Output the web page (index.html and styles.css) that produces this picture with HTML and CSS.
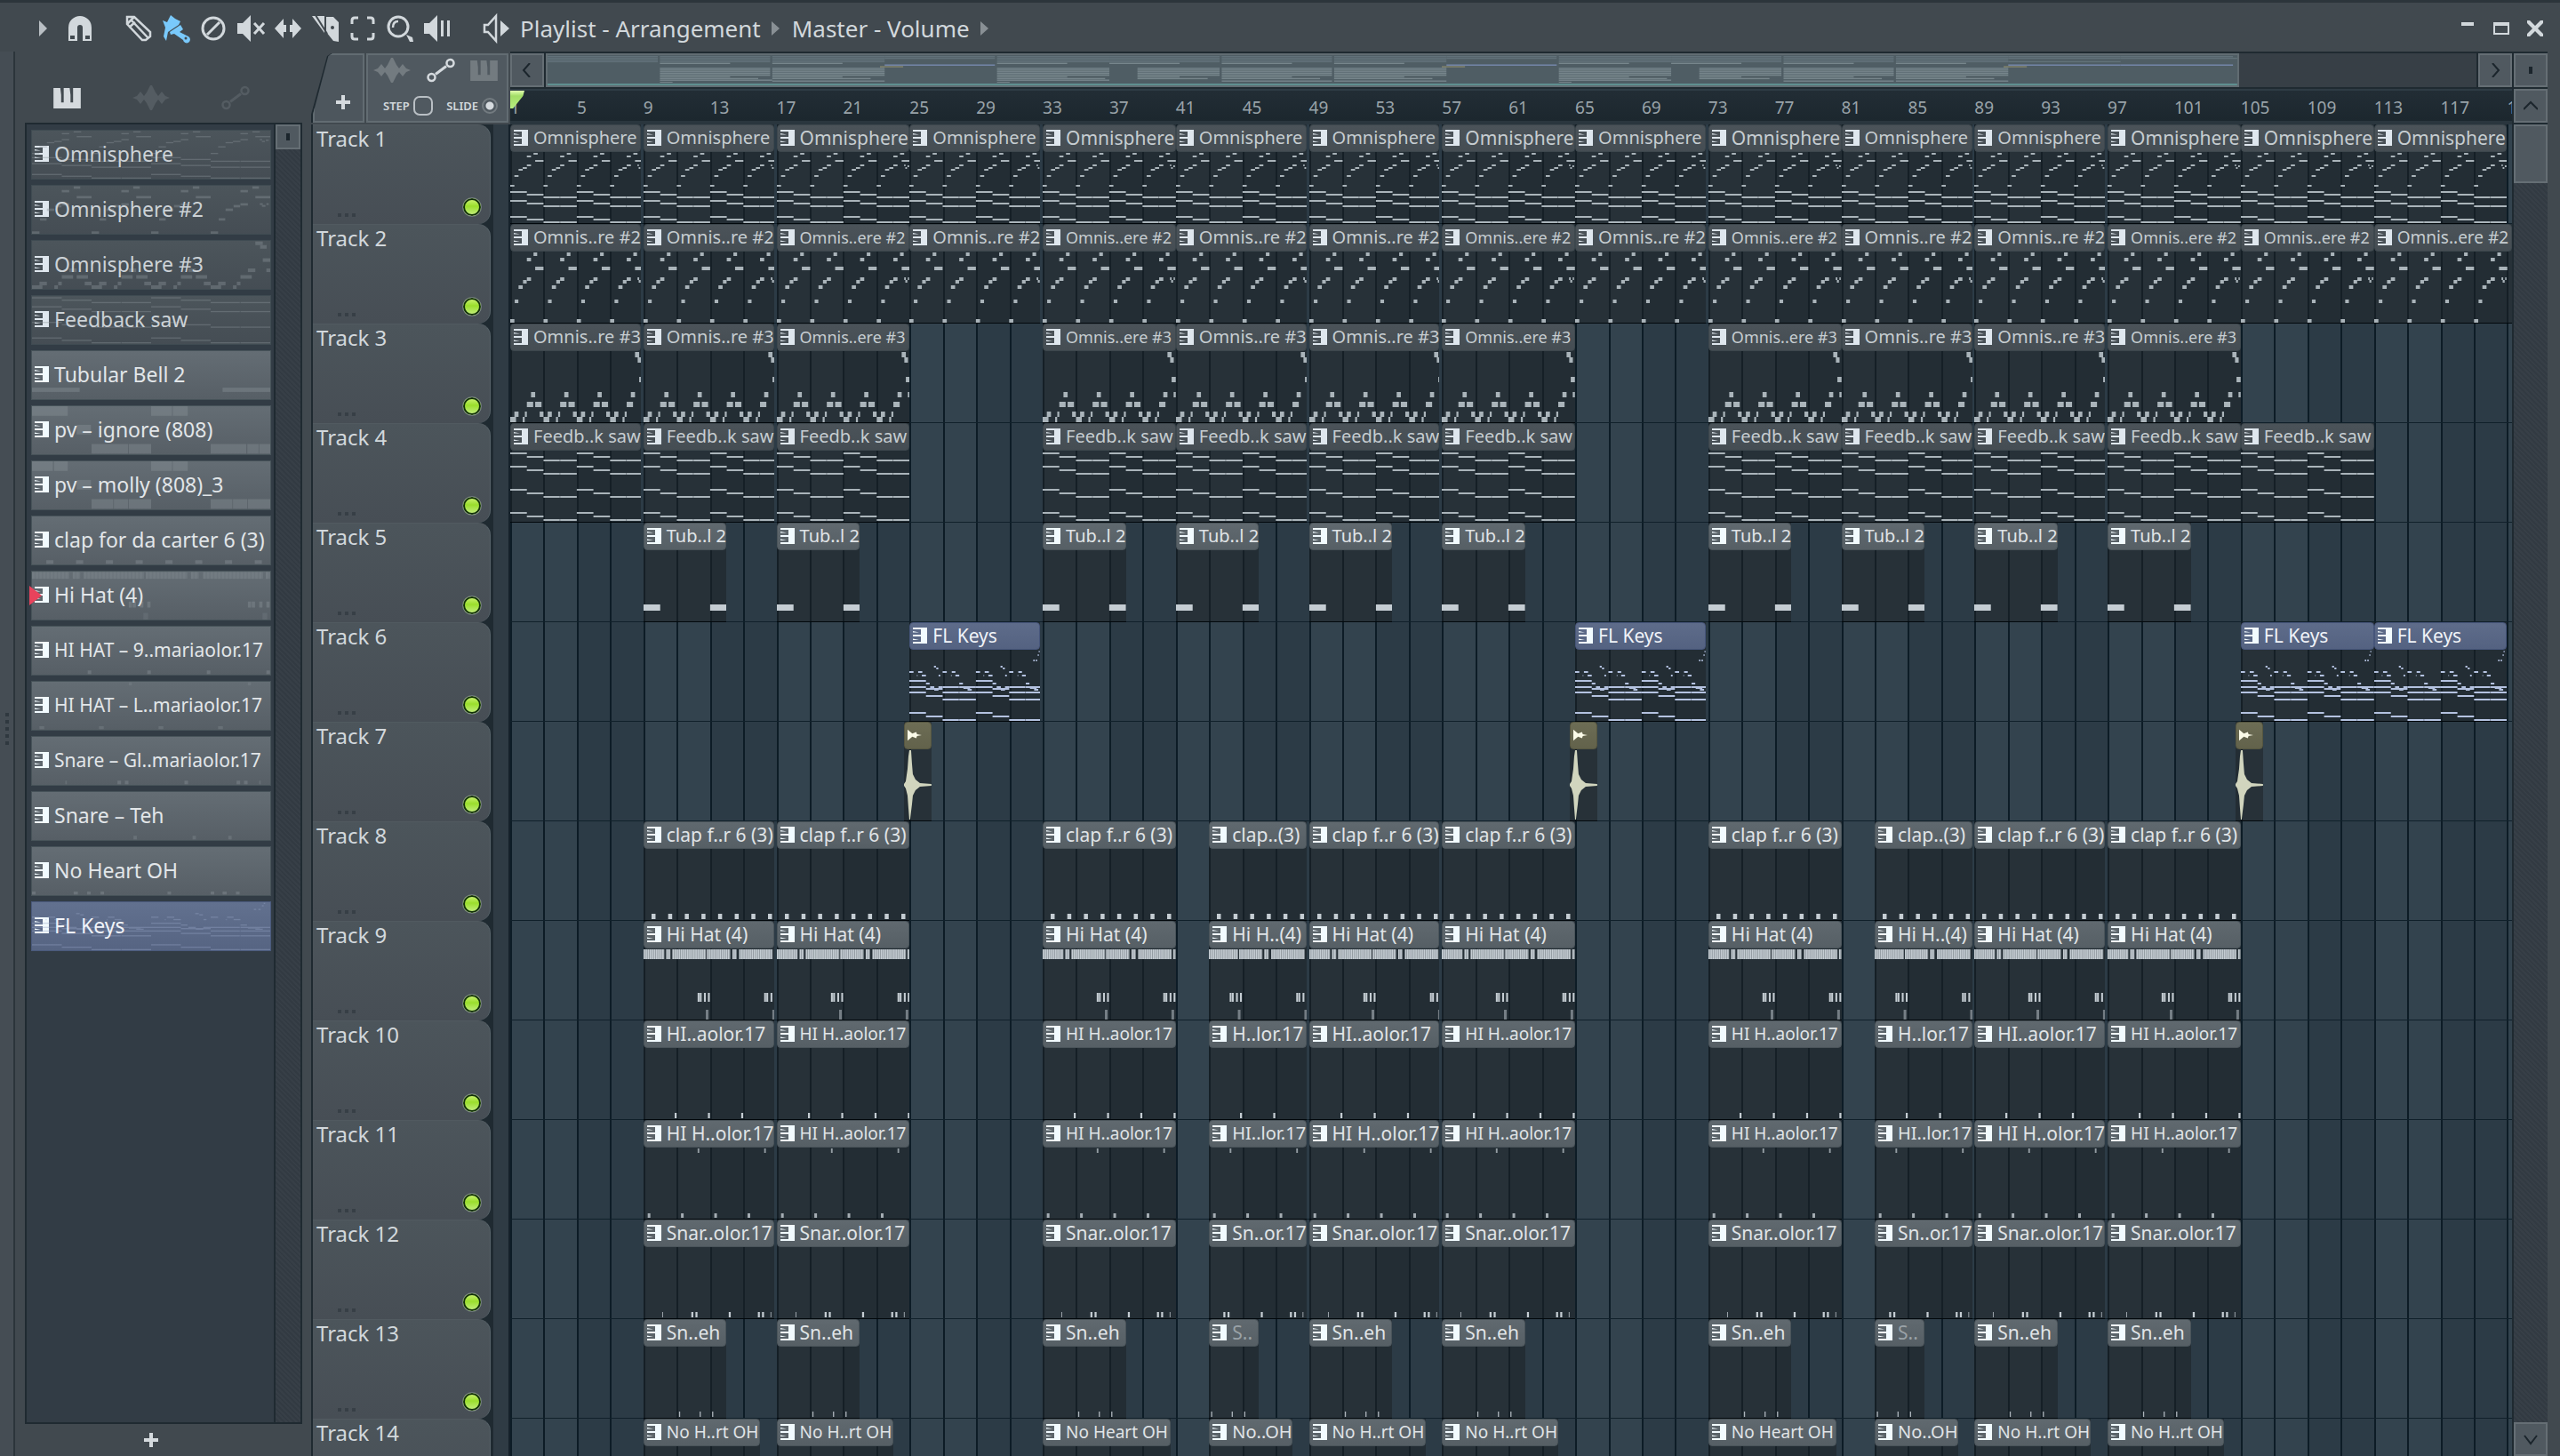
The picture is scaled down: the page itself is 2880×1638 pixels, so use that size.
FILE: index.html
```html
<!DOCTYPE html>
<html lang="en">

<head>
    <meta charset="UTF-8">
    <title>Playlist - Arrangement</title>
    <link rel="stylesheet" href="styles.css">
</head>

<body>

    <svg class="defs" aria-hidden="true">
        <symbol id="i-keys" viewBox="0 0 16 18" preserveAspectRatio="none">
            <path d="M0 0H16V18H0V16H9V10H0V8H9V2H0Z" />
            <path d="M0 4L7 5.500H0ZM0 12.500L7 14H0Z" />
        </symbol>
        <symbol id="i-piano" viewBox="0 0 32 24">
            <path d="M0 0H8L9 8V17H12V0H19L20 8V17H23V0H32V24H0Z" />
        </symbol>
        <symbol id="i-wave" viewBox="0 0 42 28">
            <path d="M0 14L5 12L9 7L13 12L16 8L20 0H22L26 8L29 12L33 7L37 12L42 14L37 16L33 21L29 16L26 20L22 28H20L16 20L13 16L9 21L5 16Z" />
        </symbol>
        <symbol id="i-auto" viewBox="0 0 32 28">
            <g fill="none" stroke="currentColor" stroke-width="2.500">
                <circle cx="5.500" cy="22" r="4" />
                <circle cx="26.500" cy="6" r="4" />
                <path d="M10 18.500L22 9.500" stroke-width="3" />
            </g>
        </symbol>
        <symbol id="i-sample" viewBox="0 0 18 14">
            <path d="M0 0L6 5L11 3L12 6L18 7L12 8L11 11L6 9L0 14Z" />
        </symbol>
    </svg>

    <header class="titlebar">
        <nav class="tools">
            <button class="tool menu" aria-label="Menu"><svg viewBox="0 0 30 30"><path d="M11 6L20 15L11 24Z" /></svg></button>
            <button class="tool magnet" aria-label="Snap"><svg viewBox="0 0 30 30"><path fill-rule="evenodd" d="M2 29V14A13 13 0 0 1 28 14V29H18V14A3 3 0 0 0 12 14V29ZM4 23V27H9V23ZM21 23V27H26V23Z" /></svg></button>
            <button class="tool" aria-label="Draw"><svg viewBox="0 0 30 30"><path class="line" d="M2 2H10L28 19V24L23 28H19L2 10ZM2 10L10 2M7 6L25 25M4 14L11 8" /></svg></button>
            <button class="tool on" aria-label="Paint"><svg viewBox="0 0 30 30"><path d="M0 6L5 8L9 0L14 4L20 7L18 11L6 19L4 29L1 24L3 14ZM20 11L23 16L19 19L29 24A4 4 0 1 1 23 28L13 21L9 22L8 19Z" /><circle cx="26" cy="26" r="1.500" class="hole" /></svg></button>
            <button class="tool" aria-label="Delete"><svg viewBox="0 0 30 30"><path class="line thick" d="M15 3A12 12 0 1 0 15 27A12 12 0 1 0 15 3M8 22L22 8" /></svg></button>
            <button class="tool" aria-label="Mute"><svg viewBox="0 0 30 30"><path d="M0 9H6L15 0V30L6 21H0Z" /><path class="line thick" d="M19 9L30 21M30 9L19 21" /></svg></button>
            <button class="tool" aria-label="Slip"><svg viewBox="0 0 30 30"><path d="M0 15L10 4V11H13V19H10V26ZM30 15L20 4V11H17V19H20V26Z" /></svg></button>
            <button class="tool" aria-label="Slice"><svg viewBox="0 0 30 30"><path d="M0 1L14 1V20ZM16 2H24L30 8V30L24 29L16 19Z" /><path class="cut" d="M4 0L17 21" /><circle cx="23" cy="14" r="2" class="hole" /></svg></button>
            <button class="tool" aria-label="Select"><svg viewBox="0 0 30 30"><path class="line thick" d="M3 10V6Q3 3 6 3H10M20 3H24Q27 3 27 6V10M27 20V24Q27 27 24 27H20M10 27H6Q3 27 3 24V20" /></svg></button>
            <button class="tool" aria-label="Zoom"><svg viewBox="0 0 30 30"><circle class="line thick" cx="13" cy="13" r="11" /><path class="line" d="M7 14Q7 7 13 7" /><path d="M22 22L29 25L30 30H26Z" /></svg></button>
            <button class="tool" aria-label="Playback"><svg viewBox="0 0 30 30"><path d="M0 9H6L15 0V30L6 21H0Z" /><path d="M19 6H22V24H19ZM26 6H29V24H26Z" /></svg></button>
            <button class="tool out" aria-label="Preview"><svg viewBox="0 0 30 30"><path class="line" d="M2 11H6L15 1V29L6 19H2Z" /><path d="M20 6L30 15L20 24Z" /></svg></button>
        </nav>
        <h1 class="crumbs"><span>Playlist - Arrangement</span><i></i><span>Master - Volume</span><i></i></h1>
        <div class="window-buttons">
            <button aria-label="Minimize"><svg viewBox="0 0 20 20"><path d="M3 3H17V7H3Z" /></svg></button>
            <button aria-label="Maximize"><svg viewBox="0 0 20 20"><path fill-rule="evenodd" d="M1 3H19V17H1ZM3 7V15H17V7Z" /></svg></button>
            <button aria-label="Close"><svg viewBox="0 0 20 20"><path d="M1 1H4L10 7L16 1H19V4L13 10L19 16V19H16L10 13L4 19H1V16L7 10L1 4Z" /></svg></button>
        </div>
    </header>

    <main class="window">
        <div class="grip"><i></i><i></i><i></i><i></i><i></i></div>

        <aside class="picker">
            <div class="tabs">
                <button class="on" aria-label="Patterns"><svg class="ic-piano"><use href="#i-piano" /></svg></button>
                <button aria-label="Audio"><svg class="ic-wave"><use href="#i-wave" /></svg></button>
                <button aria-label="Automation"><svg class="ic-auto"><use href="#i-auto" /></svg></button>
            </div>
            <div class="picker-box">
                <div class="picker-list" id="picker"></div>
                <div class="picker-scroll"><button aria-label="Scroll"><i></i></button></div>
            </div>
            <button class="add" aria-label="Add pattern"></button>
        </aside>

        <section class="playlist">
            <div class="corner">
                <div class="corner-tab"><button class="plus" aria-label="Add track"></button></div>
                <div class="corner-panel">
                    <div class="modes">
                        <svg class="ic-wave"><use href="#i-wave" /></svg>
                        <svg class="ic-auto on"><use href="#i-auto" /></svg>
                        <svg class="ic-piano"><use href="#i-piano" /></svg>
                    </div>
                    <div class="options">
                        <label>STEP<input type="checkbox"></label>
                        <label>SLIDE<input type="radio" checked></label>
                    </div>
                </div>
            </div>

            <div class="timeline">
                <div class="overview">
                    <button class="square" aria-label="Scroll left"><svg viewBox="0 0 16 16"><path d="M11 0L4 8L11 16" /></svg></button>
                    <div class="minimap"><div class="thumb" id="minimap"></div></div>
                    <button class="square" aria-label="Scroll right"><svg viewBox="0 0 16 16"><path d="M5 0L12 8L5 16" /></svg></button>
                </div>
                <div class="ruler" id="ruler"></div>
            </div>

            <div class="side-top">
                <button class="square" aria-label="View"><i></i></button>
                <button class="square" aria-label="Scroll up"><svg viewBox="0 0 16 16"><path d="M0 12L8 4L16 12" /></svg></button>
            </div>

            <div class="heads" id="heads"></div>
            <div class="lanes" id="lanes"></div>
            <div class="scroll-y">
                <div class="thumb-y"></div>
                <button class="square" aria-label="Scroll down"><svg viewBox="0 0 16 16"><path d="M1 4L8 13L15 4" /></svg></button>
            </div>
        </section>
    </main>

    <script src="playlist.js"></script>
</body>

</html>
```
FILE: styles.css
```css
* {
    box-sizing: border-box;
    margin: 0;
    padding: 0;
}

body {
    display: flex;
    flex-direction: column;
    height: 100vh;
    overflow: hidden;
    background: #41494f;
    border-top: 3px solid #2c353b;
    color: #d2d8dc;
    font-family: "Noto Sans", "Open Sans", sans-serif;
    font-size: 24px;
}

button {
    border: 0;
    background: none;
    color: inherit;
    font: inherit;
}

svg {
    display: block;
    fill: currentColor;
}

.defs {
    position: absolute;
    width: 0;
    height: 0;
}

/* title bar */
.titlebar {
    display: flex;
    align-items: center;
    height: 55px;
    padding: 2px 18px 0 27px;
}

.tools {
    display: flex;
}

.tool {
    display: flex;
    justify-content: center;
    width: 42px;
}

.tool svg {
    width: 30px;
    height: 30px;
    overflow: visible;
}

.tool .line {
    fill: none;
    stroke: currentColor;
    stroke-width: 2.500;
}

.tool .thick {
    stroke-width: 3;
}

.tool .hole {
    fill: #41494f;
}

.tool .cut {
    stroke: #41494f;
    stroke-width: 2;
}

.tool.on {
    color: #79c9fb;
}

.tool.magnet {
    margin-right: 24px;
}

.tool.out {
    margin-left: 24px;
}

.tool.menu {
    color: #b9bfc4;
}

.crumbs {
    display: flex;
    align-items: center;
    flex: 1;
    padding-left: 6px;
    font-size: 26px;
    font-weight: 400;
    line-height: 32px;
}

.crumbs i {
    margin: 0 14px 0 12px;
    border-left: 9px solid #899095;
    border-top: 8px solid transparent;
    border-bottom: 8px solid transparent;
}

.window-buttons {
    display: flex;
    gap: 18px;
}

.window-buttons svg {
    width: 20px;
    height: 20px;
}

.window {
    display: flex;
    flex: 1;
    min-height: 0;
}

/* resize handle on the far left */
.grip {
    display: flex;
    flex-direction: column;
    align-items: center;
    justify-content: center;
    gap: 4px;
    width: 17px;
    padding-bottom: 56px;
    background: #454d54;
    border-right: 2px solid #2c353b;
}

.grip i {
    width: 4px;
    height: 4px;
    background: #2f383f;
}

/* picker */
.picker {
    display: flex;
    flex-direction: column;
    flex: none;
    width: 333px;
    padding: 34px 10px 0 11px;
}

.tabs {
    display: flex;
    justify-content: space-between;
    align-items: center;
    height: 36px;
    margin-bottom: 10px;
    padding: 0 59px 0 32px;
}

.tabs button {
    color: #545c62;
}

.tabs .on {
    color: #d5dade;
}

.ic-piano {
    width: 31px;
    height: 23px;
}

.ic-wave {
    width: 42px;
    height: 28px;
}

.ic-auto {
    width: 32px;
    height: 28px;
}

.picker-box {
    display: flex;
    flex: 1;
    border: 2px solid #1f2a31;
    background: #323c45;
}

.picker-list {
    display: flex;
    flex-direction: column;
    flex: 1;
    min-width: 0;
    gap: 6px;
    padding: 6px 3px 6px 5px;
}

.pattern {
    position: relative;
    display: flex;
    align-items: center;
    width: 100%;
    height: 56px;
    padding: 0 0 2px 3px;
    border: 1px solid #3f4b52;
    background: linear-gradient(#4c555b, #454d54);
    color: #ccd2d6;
    text-align: left;
    white-space: nowrap;
}

.pattern.bright {
    border-color: #475359;
    background: linear-gradient(#646d74, #575f66);
    color: #e2e6e9;
}

.pattern.keys {
    border-color: #4a5a7c;
    background: linear-gradient(#62718f, #566482);
    color: #f0f3f8;
}

.pattern .icon,
.clip .icon {
    flex: none;
    width: 16px;
    height: 18px;
    color: #dfe7ee;
}

.pattern.bright .icon,
.pattern.keys .icon {
    color: #f2fbff;
}

.pattern .label {
    padding-left: 6px;
    font-size: 23px;
    line-height: 30px;
    z-index: 1;
}

.pattern .notes {
    position: absolute;
    inset: 0;
    width: 100%;
    height: 100%;
    fill: #8a9399;
    opacity: 0.4;
}

.pattern.keys .notes {
    fill: #94a3c4;
}

.pattern.playing::before {
    content: "";
    position: absolute;
    left: -3px;
    top: 16px;
    width: 14px;
    height: 22px;
    background: #e8435c;
    clip-path: polygon(0 0, 100% 50%, 0 100%);
    z-index: 2;
}

.picker-scroll,
.scroll-y {
    background: repeating-linear-gradient(45deg, #373f47 0 2px, #323a42 2px 4px);
}

.picker-scroll {
    flex: none;
    width: 30px;
    border-left: 2px solid #1f2a31;
}

.picker-scroll button {
    width: 28px;
    height: 28px;
    border: 2px solid #656e74;
    background: #505960;
}

.picker-scroll i,
.side-top i {
    display: block;
    width: 4px;
    height: 8px;
    margin: auto;
    background: #1b252c;
}

.plus,
.add {
    background: linear-gradient(currentColor, currentColor) center / 16px 4px no-repeat,
        linear-gradient(currentColor, currentColor) center / 4px 16px no-repeat;
    color: #d5dade;
}

.add {
    height: 36px;
    margin-right: 28px;
    padding-top: 8px;
}

/* playlist */
.playlist {
    display: grid;
    grid-template-columns: 224px minmax(0, 1fr) 40px;
    grid-template-rows: 82px minmax(0, 1fr);
    flex: 1;
    min-width: 0;
    margin-right: 14px;
    background: #1f2a31;
}

.corner {
    display: flex;
    gap: 2px;
    padding: 2px 2px 2px 0;
    background: #41494f;
}

.corner-tab {
    display: flex;
    width: 60px;
    padding: 0 0 0 2px;
    background: #1f2a31;
    clip-path: polygon(0 100%, 0 88%, 30% 4%, 38% 0, 100% 0, 100% 100%);
}

.corner-tab .plus {
    flex: 1;
    background-color: #4d565d;
    background-position: 24px 51px, 30px 45px;
    border: 2px solid #626c72;
    clip-path: polygon(0 100%, 0 88%, 30% 4%, 38% 0, 100% 0, 100% 100%);
}

.corner-panel {
    display: flex;
    flex-direction: column;
    flex: 1;
    border: 2px solid #626c72;
    background: #505960;
}

.modes {
    display: flex;
    justify-content: space-between;
    align-items: center;
    height: 34px;
    padding: 0 10px 0 6px;
    color: #737b80;
}

.modes .on {
    color: #d5dade;
}

.options {
    display: flex;
    justify-content: space-between;
    align-items: center;
    flex: 1;
    padding: 6px 10px 0 17px;
}

.options label {
    display: flex;
    align-items: center;
    gap: 4px;
    font-size: 13px;
    font-weight: 600;
    line-height: 18px;
}

.options input {
    appearance: none;
    width: 22px;
    height: 22px;
    border: 2px solid #b9bfc4;
    border-radius: 7px;
}

.options input[type="radio"] {
    width: 18px;
    height: 18px;
    border-color: #737b80;
    border-radius: 50%;
    background: radial-gradient(#d5dade 0 4px, transparent 5px);
}

.square {
    display: flex;
    align-items: center;
    justify-content: center;
    flex: none;
    width: 38px;
    height: 38px;
    border: 2px solid #656e74;
    background: #505960;
}

.square svg {
    width: 16px;
    height: 16px;
    fill: none;
    stroke: #1b252c;
    stroke-width: 2;
}

.timeline {
    display: flex;
    flex-direction: column;
    min-width: 0;
    background: #1f2a31;
}

.overview {
    display: flex;
    gap: 2px;
    padding: 2px 0;
}

.minimap {
    flex: 1;
    height: 38px;
    background: #373f46;
}

.thumb {
    width: 87.7%;
    height: 38px;
    border: 2px solid #616c72;
    background: #4f5d64;
}

.thumb svg {
    width: 100%;
    height: 34px;
}

.ruler {
    position: relative;
    flex: 1;
    overflow: hidden;
    border-top: 2px solid #2f3c45;
    border-bottom: 4px solid #2a363e;
    background: linear-gradient(#222d35, #1c272e);
}

.ruler span {
    position: absolute;
    top: 6px;
    color: #99a3a9;
    font-size: 19px;
    line-height: 26px;
}

.playhead {
    position: absolute;
    left: 0;
    top: 0;
    width: 16px;
    height: 20px;
    background: linear-gradient(#e2ffb0, #a3dd66 30%, #b7ee80);
    clip-path: polygon(0 0, 100% 0, 90% 30%, 20% 100%, 0 100%);
    z-index: 1;
}

.side-top {
    display: flex;
    flex-direction: column;
    gap: 2px;
    padding: 2px 0 0 2px;
}

/* track headers */
.heads {
    overflow: hidden;
    border-left: 2px solid #1f2a31;
    border-right: 2px solid #15212a;
}

.head {
    display: flex;
    height: 112px;
    border-right: 17px solid #2f3b44;
}

.head-face {
    display: flex;
    flex-direction: column;
    justify-content: space-between;
    width: 200px;
    height: 112px;
    padding: 0 9px 8px 4px;
    border-top: 1px solid #515a60;
    border-right: 1px solid #58636a;
    border-radius: 0 14px 14px 0;
    background: linear-gradient(#4c555b, #474e55);
}

.head h2 {
    font-size: 24px;
    font-weight: 400;
    line-height: 30px;
}

.head-foot {
    display: flex;
    justify-content: space-between;
    align-items: flex-end;
    padding-left: 24px;
}

.dots {
    width: 20px;
    height: 4px;
    background: repeating-linear-gradient(to right, #373f46 0 4px, transparent 4px 8px);
}

.led {
    width: 22px;
    height: 22px;
    border: 1px solid #717b80;
    border-radius: 50%;
    background: linear-gradient(#d2f57c, #9ade2c 45%, #c8f088);
    box-shadow: inset 0 0 0 2px #12300a;
}

/* clips */
.lanes {
    container-type: inline-size;
    overflow: hidden;
}

.lane {
    --bar: calc(100cqw / 120.3);
    position: relative;
    height: 112px;
    border-bottom: 1px solid #10202a;
    background: repeating-linear-gradient(to right, #0d1c26 0 2px, transparent 2px calc(var(--bar) * 2)),
        repeating-linear-gradient(to right, #33434e 0 calc(var(--bar) * 4), #2c3b46 calc(var(--bar) * 4) calc(var(--bar) * 8));
}

.clip {
    position: absolute;
    top: 0;
    height: 112px;
    overflow: hidden;
    background: rgba(30, 34, 38, 0.55);
    border-bottom: 1px solid #02080c;
    color: #c6cdd1;
    fill: #aab4ba;
}

.clip-head {
    display: flex;
    align-items: center;
    height: 31px;
    padding: 0 0 2px 3px;
    border: 1px solid #3d474d;
    border-radius: 4px;
    background: linear-gradient(#4b5359, #454d53);
    white-space: nowrap;
}

.clip .label {
    padding-left: 6px;
    font-size: 21px;
    line-height: 26px;
}

.clip .notes {
    width: 100%;
    height: 80px;
    fill: inherit;
}

.clip.bright {
    color: #e0e4e7;
    fill: #c5cdd3;
}

.clip.bright .clip-head {
    border-color: #4a545a;
    background: linear-gradient(#60696f, #565f65);
}

.clip.bright .icon,
.clip.keys .icon {
    color: #f2fbff;
}

.clip.keys {
    color: #f0f3f8;
    fill: #b4c2e0;
}

.clip.keys .clip-head {
    border-color: #46557a;
    background: linear-gradient(#5e6c8a, #546281);
}

.clip.audio {
    fill: #d1d5be;
}

.clip.audio .clip-head {
    border-color: #565640;
    background: linear-gradient(#6d6d55, #62624b);
}

.clip.audio .icon {
    height: 14px;
    color: #fbfbe8;
}

.clip .faded {
    color: #9aa2a7;
}

.scroll-y {
    display: flex;
    flex-direction: column;
    justify-content: space-between;
    border-left: 2px solid #1f2a31;
}

.thumb-y {
    width: 38px;
    height: 66px;
    border: 2px solid #656e74;
    background: #505960;
}
```
FILE: playlist.js
```js
const BARS = 120.3; // bars visible in the playlist
const SHORT = 7.85;

// notes are [start bar, length in bars, y, height]
function chords(rows) {
    const out = [];
    [0, 4].forEach((b) => {
        rows[0].forEach((y) => out.push([b, 1, y, 2]));
        rows[1].forEach((y) => out.push([b + 1, 1, y, 2]));
        rows[2].forEach((y) => out.push([b + 2, 0.98, y, 2], [b + 3, 1, y, 2]));
    });
    return out;
}

function loop(notes, step, count) {
    const out = [];
    for (let i = 0; i < count; i++) {
        notes.forEach((n) => out.push([n[0] + i * step, n[1], n[2], n[3], n[4]]));
    }
    return out;
}

function hats() {
    const out = [];
    [[0, 1.25], [1.37, 1.62], [1.74, 3.76], [3.82, 5.22], [5.34, 5.6], [5.75, 7.76], [7.85, 8]].forEach(([a, b]) => {
        out.push([a, b - a, 1, 11, 0.65]);
        for (let x = a; x < b - 0.05; x += 0.125) out.push([x, 0.08, 1, 11]);
    });
    [3.25, 3.38, 3.63, 3.87, 7.25, 7.38, 7.63, 7.87].forEach((x) => out.push([x, 0.11, 50, 10]));
    out.push([3.74, 0.16, 69, 11, 0.5], [7.74, 0.16, 69, 11, 0.5]);
    return out;
}

const ticks = (xs, w, y, h, o) => xs.map((x) => [x, w, y, h, o]);

const patterns = {
    omni1: loop([[0, .25, 37, 2], [.25, .25, 26, 2], [.5, .25, 19, 2], [.75, .25, 17, 2], [1, .25, 14, 2], [1, .25, 4, 2], [1.4, .25, 1, 2], [1.5, .5, 9, 2]], 2, 4)
        .concat([[7.65, .08, 14, 2], [7.72, .1, 17, 2], [7.85, .1, 15, 2]], chords([[44, 54, 72], [47, 57, 75], [50, 60, 78]])),
    omni2: loop([[0, .25, 76, 4], [.27, .22, 54, 4], [.5, .25, 38, 4], [.77, .22, 32, 4], [1, .25, 29, 4], [1, .25, 7, 4], [1.4, .22, 1, 4], [1.5, .5, 17, 4]], 2, 4)
        .concat([[7.65, .1, 29, 3], [7.72, .12, 32, 3], [7.87, .08, 29, 3]]),
    omni3: loop([[0, .35, 74, 6], [.25, .25, 68, 6], [.75, .12, 74, 6], [.88, .12, 68, 6], [1, .38, 57, 6], [1.25, .25, 46, 6]], 2, 4)
        .concat(loop([[1.5, .38, 57, 6], [1.77, .23, 68, 6]], 2, 3), [[7.5, .25, 1, 6], [7.66, .22, 7, 6], [7.75, .25, 29, 6], [7.87, .13, 46, 6]]),
    saw: chords([[2, 17, 43, 69], [6, 21, 47, 73], [10, 25, 51, 77]]),
    bell: [[0, 1, 61, 7], [4, 1, 61, 7]],
    pv1: [[0, 1.2, 0, 16], [4, .7, 0, 16], [4.73, .5, 0, 16], [1.5, .48, 31, 16], [2, 1.23, 63, 16], [3.25, .75, 63, 16], [6, 1.2, 63, 16], [7.23, .38, 63, 16], [7.63, .37, 63, 16]],
    pv2: [[0, .7, 0, 16], [.74, .46, 0, 16], [4, .7, 0, 16], [4.73, .5, 0, 16], [1.5, .48, 31, 16], [2, .73, 63, 16], [2.75, .48, 63, 16], [3.25, .75, 63, 16], [6, .73, 63, 16], [6.75, .48, 63, 16], [7.25, .75, 63, 16]],
    clap: loop([[.48, .24, 73, 6]], 1, 8),
    hat: hats(),
    hh9: ticks([1.87, 3.87, 5.87, 7.87], .12, 73, 6),
    hhL: ticks([.25, 2.25, 4.25, 6.25], .16, 74, 5, .8).concat(ticks([3.25, 7.25], .1, 1, 5, .7)),
    snare: ticks([2.87, 3.12, 5.12, 6.87, 7.12], .12, 73, 6).concat(ticks([1.12, 7.63], .05, 73, 6, .8)),
    teh: ticks([2.13, 3.37, 4.12], .07, 73, 6, .85),
    oh: [[0, .12, 74, 5], [1.4, .14, 74, 5], [1.85, .12, 74, 5], [2.3, .12, 74, 5], [4.55, .12, 74, 5], [6, .12, 74, 5], [6.4, .14, 74, 5], [6.85, .12, 74, 5]],
    keys: loop([[0, .25, 24, 2], [.45, .05, 28, 2, .6], [.53, .25, 24, 2], [.75, .25, 28, 2], [1.48, .12, 18, 2], [1.62, .12, 20, 2], [1.76, .1, 28, 2], [2, .25, 24, 2], [2.5, .05, 28, 2, .6], [2.55, .22, 24, 2], [2.77, .23, 28, 2],
        [0, 1, 34, 2], [0, 1, 41, 2], [0, 1, 47, 2], [0, 1, 70, 2],
        [1, .22, 37, 2], [1.25, .25, 41, 2], [1.75, .25, 41, 2], [1, 1, 43, 2], [1.5, .25, 44, 2], [1, 1, 51, 2], [1, 1, 74, 2],
        [2, .98, 41, 2], [3, 1, 41, 2], [2, .98, 47, 2], [3, 1, 47, 2], [2, .98, 55, 2], [3, 1, 55, 2], [2, .98, 78, 2], [3, 1, 78, 2],
        [3, .22, 37, 2], [3.25, .4, 42, 2], [3.5, .25, 44, 2]], 4, 2)
        .concat([[7.45, .08, 11, 2], [7.6, .08, 11, 2], [7.72, .06, 5, 2], [7.78, .05, 1, 2]])
};

const picker = [
    ['Omnisphere', 'omni1', ''],
    ['Omnisphere #2', 'omni2', ''],
    ['Omnisphere #3', 'omni3', ''],
    ['Feedback saw', 'saw', ''],
    ['Tubular Bell 2', 'bell', 'bright'],
    ['pv – ignore (808)', 'pv1', 'bright'],
    ['pv – molly (808)_3', 'pv2', 'bright'],
    ['clap for da carter 6 (3)', 'clap', 'bright'],
    ['Hi Hat (4)', 'hat', 'bright playing'],
    ['HI HAT – 9..mariaolor.17', 'hh9', 'bright'],
    ['HI HAT – L..mariaolor.17', 'hhL', 'bright'],
    ['Snare – Gl..mariaolor.17', 'snare', 'bright'],
    ['Snare – Teh', 'teh', 'bright'],
    ['No Heart OH', 'oh', 'bright'],
    ['FL Keys', 'keys', 'keys']
];

// clips that stop just before the next one starts
const shortAt = [1, 9, 25, 41, 49, 65, 81, 89];
const full = (bar) => (shortAt.includes(bar) ? SHORT : 8);

const all = [1, 9, 17, 25, 33, 41, 49, 57, 65, 73, 81, 89, 97, 105, 113];
const verses = [1, 9, 17, 33, 41, 49, 57, 73, 81, 89, 97];
const drums = [9, 17, 33, 43, 49, 57, 73, 83, 89, 97];

function fullClips(bars, pattern, cls, shortName, longName) {
    return bars.map((bar) => ({ bar, len: full(bar), pattern, cls, name: full(bar) === 8 ? longName : shortName }));
}

function drumClips(pattern, names) {
    return drums.map((bar) => {
        const cut = bar === 43 || bar === 83;
        const len = cut ? 5.85 : full(bar);
        return { bar, len, pattern, cls: 'bright', off: cut ? 2 : 0, name: cut ? names[2] : len === 8 ? names[1] : names[0] };
    });
}

const tracks = [
    fullClips(all, 'omni1', '', 'Omnisphere', 'Omnisphere'),
    fullClips(all, 'omni2', '', 'Omnis..re #2', 'Omnis..ere #2'),
    fullClips(verses, 'omni3', '', 'Omnis..re #3', 'Omnis..ere #3'),
    fullClips(verses.concat(105), 'saw', '', 'Feedb..k saw', 'Feedb..k saw'),
    verses.slice(1).map((bar) => ({ bar, len: 5, pattern: 'bell', cls: 'bright', name: 'Tub..l 2' })),
    fullClips([25, 65, 105, 113], 'keys', 'keys', 'FL Keys', 'FL Keys'),
    [25, 65, 105].map((bar) => ({ bar: bar - 0.33, len: 1.65, cls: 'audio' })),
    drumClips('clap', ['clap f..r 6 (3)', 'clap f..r 6 (3)', 'clap..(3)']),
    drumClips('hat', ['Hi Hat (4)', 'Hi Hat (4)', 'Hi H..(4)']),
    drumClips('hh9', ['HI..aolor.17', 'HI H..aolor.17', 'H..lor.17']),
    drumClips('hhL', ['HI H..olor.17', 'HI H..aolor.17', 'HI..lor.17']),
    drumClips('snare', ['Snar..olor.17', 'Snar..olor.17', 'Sn..or.17']),
    drums.map((bar) => {
        const cut = bar === 43 || bar === 83;
        return { bar, len: cut ? 3 : 5, pattern: 'teh', cls: 'bright', off: cut ? 2 : 0, name: cut ? 'S..' : 'Sn..eh', faded: cut };
    }),
    drums.map((bar) => {
        const cut = bar === 43 || bar === 83;
        const whole = bar === 33 || bar === 73;
        return { bar, len: cut ? 5 : whole ? 7.7 : 7, pattern: 'oh', cls: 'bright', off: cut ? 2 : 0, name: cut ? 'No..OH' : whole ? 'No Heart OH' : 'No H..rt OH' };
    })
];
tracks[1][tracks[1].length - 1].len = 8.3;

function notesSvg(pattern, len, off) {
    const rects = patterns[pattern].filter((n) => n[0] + n[1] > off && n[0] < off + len).map((n) =>
        `<rect x="${(n[0] - off) * 100}" y="${n[2]}" width="${n[1] * 100}" height="${n[3]}" opacity="${n[4] || 1}"/>`);
    return `<svg class="notes" viewBox="0 0 ${len * 100} 80" preserveAspectRatio="none">${rects.join('')}</svg>`;
}

const waveSvg = '<svg class="notes" viewBox="0 0 31 80" preserveAspectRatio="none">' +
    '<path d="M0 39L2 36L4 22L5 8L6 1H8L9 16L10 28L13 34L18 38L31 39V41L18 42L13 46L10 52L9 62L8 70L7 79H6L5 66L4 52L2 44L0 41Z"/></svg>';

function clipHtml(clip) {
    const audio = clip.cls === 'audio';
    return `<div class="clip ${clip.cls}" style="left:${(clip.bar - 1) / BARS * 100}%;width:${clip.len / BARS * 100}%">
        <div class="clip-head"><svg class="icon"><use href="#${audio ? 'i-sample' : 'i-keys'}"/></svg>${audio ? '' : `<span class="label${clip.faded ? ' faded' : ''}">${clip.name}</span>`}</div>
        ${audio ? waveSvg : notesSvg(clip.pattern, clip.len, clip.off || 0)}
    </div>`;
}

document.getElementById('picker').innerHTML = picker.map(([name, pattern, cls]) =>
    `<button class="pattern ${cls}">${notesSvg(pattern, pattern === 'bell' || pattern === 'teh' ? 5 : 8, 0)}<svg class="icon"><use href="#i-keys"/></svg><span class="label">${name}</span></button>`
).join('');

document.getElementById('heads').innerHTML = tracks.map((t, i) =>
    `<div class="head"><div class="head-face"><h2>Track ${i + 1}</h2><div class="head-foot"><i class="dots"></i><i class="led"></i></div></div></div>`
).join('');

document.getElementById('lanes').innerHTML = tracks.map((t) => `<div class="lane">${t.map(clipHtml).join('')}</div>`).join('');

let marks = '<i class="playhead"></i>';
for (let bar = 1; bar <= 121; bar += 4) {
    marks += `<span style="left:${(bar - 1) / BARS * 100}%">${bar}</span>`;
}
document.getElementById('ruler').innerHTML = marks;

// overview strip, two pixels per track
const miniColor = (i, cls) => (cls === 'keys' ? '#7789ae' : cls === 'audio' ? '#86866e' : i < 4 ? '#62727a' : '#77868c');
let mini = '';
tracks.forEach((t, i) => t.forEach((clip) => {
    mini += `<rect x="${(clip.bar - 1) * 10}" y="${1 + i * 1.9}" width="${clip.len * 10}" height="1.4" fill="${miniColor(i, clip.cls)}"/>`;
}));
[9, 33, 73].forEach((bar) => {
    mini += `<rect x="${(bar - 1) * 10}" y="27.500" width="80" height="1.4" fill="#77868c"/>`;
    mini += `<rect x="${(bar - 1) * 10}" y="30" width="9" height="1" fill="#77868c"/>`;
});
[17, 49, 57, 89, 97].forEach((bar) => {
    mini += `<rect x="${(bar - 1) * 10}" y="28.500" width="${full(bar) * 10}" height="1.4" fill="#77868c"/>`;
});
document.getElementById('minimap').innerHTML =
    `<svg viewBox="0 0 1203 34" preserveAspectRatio="none">${mini}<rect y="32" width="1203" height="2" fill="#5f8f90"/></svg>`;

// pick the largest label size that fits its box
function fit(label, box, sizes) {
    for (const size of sizes) {
        label.style.fontSize = size + 'px';
        if (label.getBoundingClientRect().right <= box.getBoundingClientRect().right) break;
    }
}
document.querySelectorAll('.clip .label').forEach((l) => fit(l, l.parentNode, [21, 20, 19, 18]));
document.querySelectorAll('.pattern .label').forEach((l) => fit(l, l.parentNode, [23, 21, 20, 19]));
```
